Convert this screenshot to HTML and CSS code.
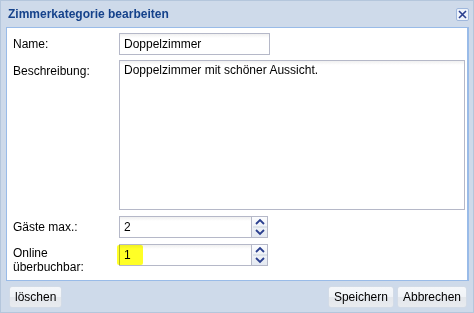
FILE: index.html
```html
<!DOCTYPE html>
<html>
<head>
<meta charset="utf-8">
<link rel="stylesheet" href="styles.css">
</head>
<body>
<div class="window">
  <div class="header">
    <span class="title">Zimmerkategorie bearbeiten</span>
    <span class="close">
      <svg width="11" height="11" viewBox="0 0 11 11"><path d="M2 2 L9 9 M9 2 L2 9" stroke="#2a3f8f" stroke-width="1.6" fill="none"/></svg>
    </span>
  </div>
  <div class="body">
    <div class="row">
      <label class="lbl">Name:</label>
      <div class="field name">Doppelzimmer</div>
    </div>
    <div class="row">
      <label class="lbl">Beschreibung:</label>
      <div class="field area">Doppelzimmer mit schöner Aussicht.</div>
    </div>
    <div class="row spin-row">
      <label class="lbl">Gäste max.:</label>
      <div class="spin">
        <div class="field num">2</div>
        <div class="arrows">
          <svg width="16" height="22" viewBox="0 0 16 22"><path d="M4 8 L8 4 L12 8" stroke="#2a3f8f" stroke-width="1.8" fill="none"/><path d="M4 14 L8 18 L12 14" stroke="#2a3f8f" stroke-width="1.8" fill="none"/><line x1="1" y1="11" x2="15" y2="11" stroke="#c9d2de"/></svg>
        </div>
      </div>
    </div>
    <div class="row spin-row">
      <label class="lbl two">Online<br>überbuchbar:</label>
      <div class="spin">
        <div class="field num">1</div>
        <div class="arrows">
          <svg width="16" height="22" viewBox="0 0 16 22"><path d="M4 8 L8 4 L12 8" stroke="#2a3f8f" stroke-width="1.8" fill="none"/><path d="M4 14 L8 18 L12 14" stroke="#2a3f8f" stroke-width="1.8" fill="none"/><line x1="1" y1="11" x2="15" y2="11" stroke="#c9d2de"/></svg>
        </div>
        <span class="highlight"></span>
      </div>
    </div>
  </div>
  <div class="footer">
    <button class="btn">löschen</button>
    <div class="right">
      <button class="btn">Speichern</button>
      <button class="btn">Abbrechen</button>
    </div>
  </div>
</div>
</body>
</html>
```
FILE: styles.css
```css
html, body { margin: 0; padding: 0; }
body { font-family: "Liberation Sans", Arial, sans-serif; font-size: 12px; color: #000; }
.window {
  width: 474px; height: 313px; box-sizing: border-box;
  background: #cedaea;
  border: 1px solid #b4c6dc;
  display: flex; flex-direction: column;
}
.header {
  height: 26px; display: flex; align-items: center; justify-content: space-between;
  padding: 0 4px 0 7px;
}
.title { font-weight: bold; font-size: 12px; color: #15428b; }
.close {
  width: 13px; height: 13px; box-sizing: border-box;
  border: 1px solid #9fb7dc; border-radius: 2px; background: #eef3fb;
  display: flex; align-items: center; justify-content: center;
  margin-top: 1px;
}
.body {
  margin: 0 4px 0 5px;
  height: 254px; box-sizing: border-box;
  background: #fff;
  border: 1px solid #99bbe8; border-right-width: 2px;
  padding: 5px 0 0 6px;
  display: flex; flex-direction: column; gap: 5px;
  position: relative;
}
.row { display: flex; align-items: flex-start; }
.lbl { width: 106px; flex: none; padding-top: 4px; line-height: 14px; }
.lbl.two { padding-top: 2px; }
.field {
  box-sizing: border-box; border: 1px solid #b5b8c8;
  background: #fff linear-gradient(#f0f0f0, #fff 4px);
  padding: 3px 4px; line-height: 14px;
}
.name { width: 151px; height: 22px; }
.area { width: 346px; height: 150px; padding-top: 2px; }
.spin-row { margin-top: 1px; }
.spin { display: flex; position: relative; }
.num { width: 133px; height: 22px; }
.arrows {
  width: 16px; height: 22px; box-sizing: border-box;
  border: 1px solid #b5b8c8; border-left: none;
  background: linear-gradient(#fbfcfe, #e4e9f1);
}
.arrows svg { display: block; margin-top: -1px; }
.highlight {
  position: absolute; left: -2px; top: 1px; width: 26px; height: 20px;
  background: rgba(255, 255, 0, 0.85); mix-blend-mode: multiply;
  border-radius: 2px;
}
.footer {
  flex: 1; display: flex; align-items: center; justify-content: space-between;
  padding: 0 6px 0 8px;
}
.right { display: flex; gap: 3px; }
.btn {
  font-family: "Liberation Sans", Arial, sans-serif; font-size: 12px; color: #000;
  height: 22px; padding: 0 5px;
  border: 1px solid #d2dbe7; border-radius: 3px;
  background: linear-gradient(#f5f7fa 0, #f0f3f7 50%, #e3e7ec 51%, #e8ebef 100%);
}
```
